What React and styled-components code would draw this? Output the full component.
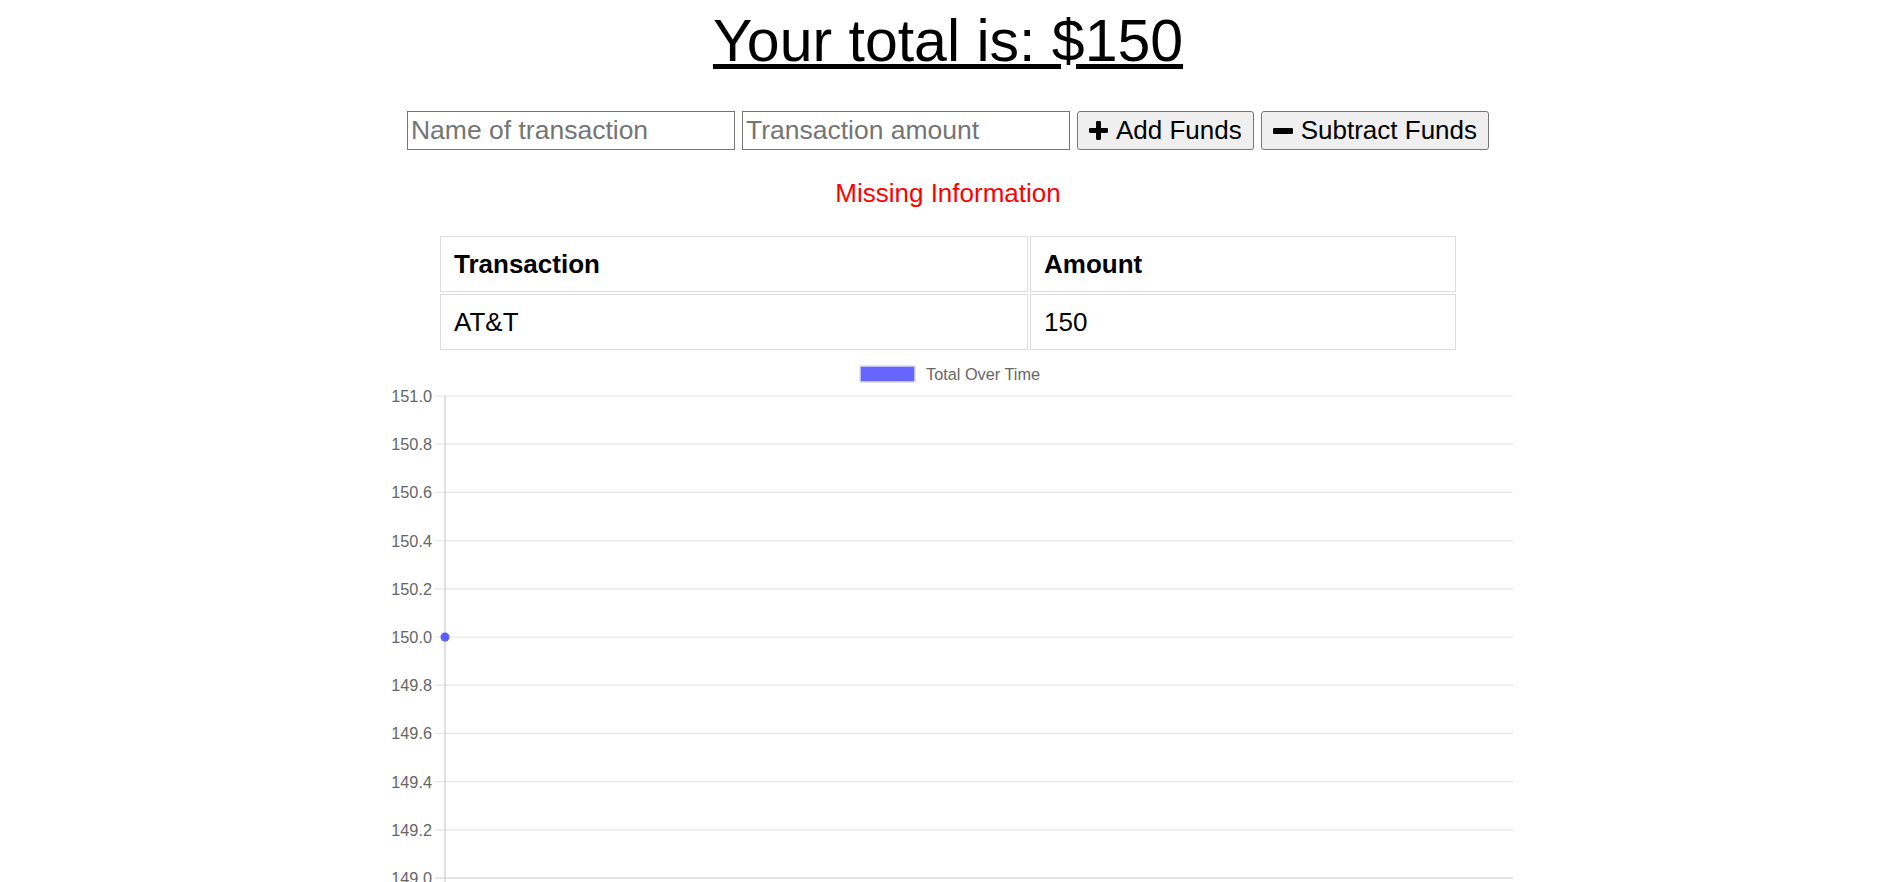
import React from "react";
import styled, { createGlobalStyle } from "styled-components";

const GlobalStyle = createGlobalStyle`
  html, body { margin: 0; padding: 0; background: #fff; overflow: hidden; }
  body { font-family: "Liberation Sans", Arial, sans-serif; color: #000; }
`;

const Page = styled.div`
  padding-top: 8px;
  display: flex;
  flex-direction: column;
  align-items: center;
`;

const Title = styled.h1`
  margin: 0;
  font-size: 59px;
  line-height: 66px;
  font-weight: 400;
  text-decoration: underline;
`;

const Controls = styled.form`
  margin-top: 37px;
  display: flex;
  gap: 7px;
`;

const TextInput = styled.input`
  box-sizing: border-box;
  width: 328px;
  height: 39px;
  padding: 0 3px;
  border: 1px solid #767676;
  border-radius: 0;
  background: #fff;
  font: 26.5px "Liberation Sans", Arial, sans-serif;
  color: #000;
  outline: none;
  &::placeholder { color: #757575; }
`;

const ActionButton = styled.button`
  box-sizing: border-box;
  height: 39px;
  display: inline-flex;
  align-items: center;
  gap: 8px;
  padding: 0 11px;
  border: 1px solid #767676;
  border-radius: 3px;
  background: #efefef;
  font: 26px "Liberation Sans", Arial, sans-serif;
  color: #000;
`;

const ErrorText = styled.p`
  margin: 28px 0 0;
  color: #ff0000;
  font-size: 26px;
  line-height: 30px;
`;

const Table = styled.table`
  margin-top: 26px;
  width: 1020px;
  table-layout: fixed;
  border-collapse: separate;
  border-spacing: 2px;
  font-size: 26px;
`;

const Cell = styled.td`
  width: ${(p) => (p.$w ? `${p.$w}px` : "auto")};
  box-sizing: border-box;
  text-align: left;
  font-weight: ${(p) => (p.$head ? 700 : 400)};
  padding: 12px 13px;
  line-height: 30px;
  border: 1px solid #dddddd;
`;

const ChartFrame = styled.div`
  margin-top: 4px;
  width: 1136px;
  svg { display: block; }
`;

const PlusIcon = () => (
  <svg width="19" height="19" viewBox="0 0 20 20" aria-hidden="true">
    <rect x="7.4" y="0" width="5.2" height="20" rx="1.2" fill="#000" />
    <rect x="0" y="7.4" width="20" height="5.2" rx="1.2" fill="#000" />
  </svg>
);

const MinusIcon = () => (
  <svg width="20" height="6" viewBox="0 0 20 6" aria-hidden="true">
    <rect x="0" y="0" width="20" height="6" rx="1.2" fill="#000" />
  </svg>
);

const ticks = ["151.0", "150.8", "150.6", "150.4", "150.2", "150.0", "149.8", "149.6", "149.4", "149.2", "149.0"];
const TOP = 40;
const STEP = 48.2;
const AXIS_X = 65;
const RIGHT = 1133;

const Chart = () => (
  <ChartFrame>
    <svg width="1136" height="600" viewBox="0 0 1136 600">
      <rect x="480" y="10" width="55" height="16" fill="#6666ff" stroke="#dcdcf0" strokeWidth="1.5" />
      <text x="546" y="24" fontSize="16.3" fill="#666" fontFamily="Liberation Sans, Arial, sans-serif">
        Total Over Time
      </text>
      {ticks.map((t, i) => {
        const y = TOP + i * STEP;
        const last = i === ticks.length - 1;
        return (
          <g key={t}>
            <line x1="55" x2={RIGHT} y1={y} y2={y} stroke={last ? "#cccccc" : "#e6e6e6"} strokeWidth="1.2" />
            <text
              x="52"
              y={y}
              dominantBaseline="central"
              textAnchor="end"
              fontSize="16.3"
              fill="#666"
              fontFamily="Liberation Sans, Arial, sans-serif"
            >
              {t}
            </text>
          </g>
        );
      })}
      <line x1={AXIS_X} x2={AXIS_X} y1={TOP} y2="600" stroke="#cccccc" strokeWidth="1.2" />
      <circle cx={AXIS_X} cy={TOP + 5 * STEP} r="4.5" fill="#5c5cff" />
    </svg>
  </ChartFrame>
);

export default function App() {
  return (
    <>
      <GlobalStyle />
      <Page>
        <Title>Your total is: $150</Title>
        <Controls onSubmit={(e) => e.preventDefault()}>
          <TextInput type="text" placeholder="Name of transaction" />
          <TextInput type="number" placeholder="Transaction amount" />
          <ActionButton type="button">
            <PlusIcon />
            Add Funds
          </ActionButton>
          <ActionButton type="button">
            <MinusIcon />
            Subtract Funds
          </ActionButton>
        </Controls>
        <ErrorText>Missing Information</ErrorText>
        <Table>
          <thead>
            <tr>
              <Cell as="th" $head $w={588}>Transaction</Cell>
              <Cell as="th" $head>Amount</Cell>
            </tr>
          </thead>
          <tbody>
            <tr>
              <Cell $w={588}>AT&amp;T</Cell>
              <Cell>150</Cell>
            </tr>
          </tbody>
        </Table>
        <Chart />
      </Page>
    </>
  );
}
